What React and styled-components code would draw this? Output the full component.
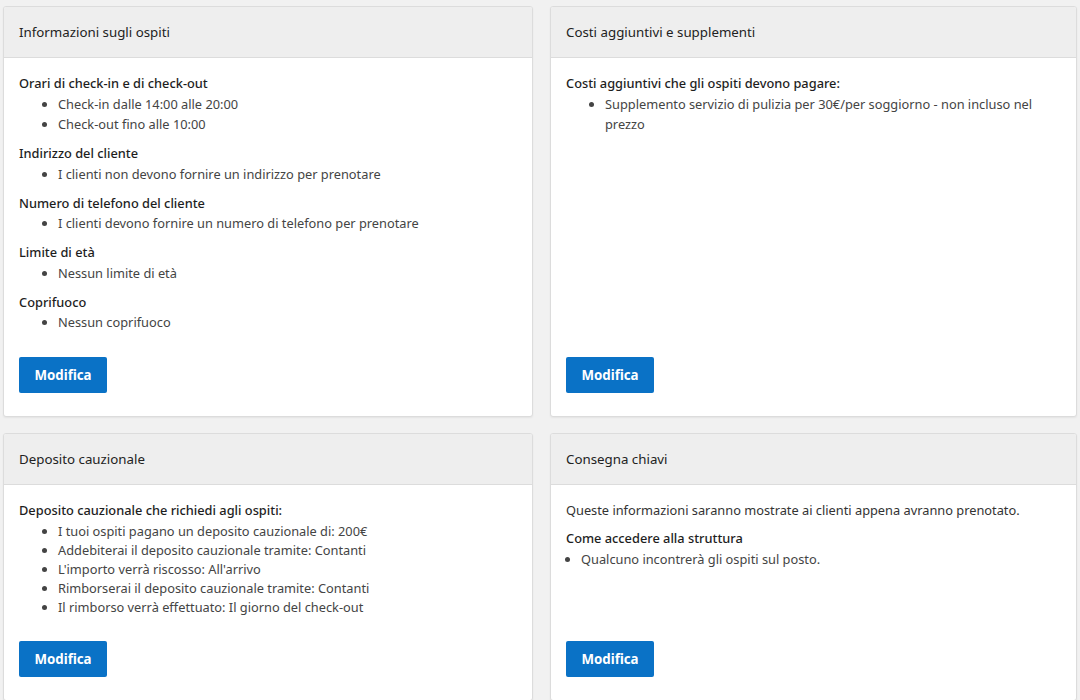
import React from 'react'
import styled, { createGlobalStyle } from 'styled-components'

const GlobalStyle = createGlobalStyle`
  html, body {
    margin: 0;
    background: #f1f1f1;
  }
  body {
    font-family: 'Noto Sans', 'Open Sans', sans-serif;
    font-size: 12.8px;
    color: #333;
  }
`

const Page = styled.div`
  display: grid;
  grid-template-columns: 530px 1fr;
  gap: 16px 17px;
  padding: 6px 3px;
`

const Card = styled.section`
  display: flex;
  flex-direction: column;
  background: #fff;
  border: 1px solid #dcdcdc;
  border-radius: 3px;
  box-shadow: 0 1px 2px rgba(0, 0, 0, 0.06);
  overflow: hidden;
`

const CardHeader = styled.header`
  height: 50px;
  display: flex;
  align-items: center;
  padding: 0 15px;
  background: #eeeeee;
  border-bottom: 1px solid #dcdcdc;
  color: #222;
  font-size: 13.3px;
`

const CardBody = styled.div`
  flex: 1;
  display: flex;
  flex-direction: column;
  padding: 15px 15px 23px;
  line-height: 20.5px;
`

const Intro = styled.p`
  margin: 0 0 8px;
  color: #333;
`

const Section = styled.div`
  & + & {
    margin-top: 8.5px;
  }
`

const Heading = styled.div`
  color: #1e1e1e;
  font-weight: 500;
`

const List = styled.ul`
  margin: ${({ $dense }) => ($dense ? '2px 0 0' : '0')};
  padding-left: ${({ $compact }) => ($compact ? '15px' : '39px')};
  padding-right: ${({ $wrapAt }) => $wrapAt || '0'};
  line-height: ${({ $dense }) => ($dense ? '19px' : 'inherit')};
  color: #444;
`

const Button = styled.button`
  align-self: flex-start;
  margin-top: auto;
  width: 88px;
  height: 36px;
  border: none;
  border-radius: 2px;
  background: #0a72c6;
  color: #fff;
  font-family: inherit;
  font-size: 13.3px;
  font-weight: 700;
  cursor: pointer;
`

const Spacer = styled.div`
  height: 24px;
  flex-shrink: 0;
`

const cards = [
  {
    title: 'Informazioni sugli ospiti',
    sections: [
      { heading: 'Orari di check-in e di check-out', items: ['Check-in dalle 14:00 alle 20:00', 'Check-out fino alle 10:00'] },
      { heading: 'Indirizzo del cliente', items: ['I clienti non devono fornire un indirizzo per prenotare'] },
      { heading: 'Numero di telefono del cliente', items: ['I clienti devono fornire un numero di telefono per prenotare'] },
      { heading: 'Limite di età', items: ['Nessun limite di età'] },
      { heading: 'Coprifuoco', items: ['Nessun coprifuoco'] },
    ],
  },
  {
    title: 'Costi aggiuntivi e supplementi',
    wrapAt: '16px',
    sections: [
      {
        heading: 'Costi aggiuntivi che gli ospiti devono pagare:',
        items: ['Supplemento servizio di pulizia per 30€/per soggiorno - non incluso nel prezzo'],
      },
    ],
  },
  {
    title: 'Deposito cauzionale',
    dense: true,
    sections: [
      {
        heading: 'Deposito cauzionale che richiedi agli ospiti:',
        items: [
          'I tuoi ospiti pagano un deposito cauzionale di: 200€',
          'Addebiterai il deposito cauzionale tramite: Contanti',
          "L'importo verrà riscosso: All'arrivo",
          'Rimborserai il deposito cauzionale tramite: Contanti',
          'Il rimborso verrà effettuato: Il giorno del check-out',
        ],
      },
    ],
  },
  {
    title: 'Consegna chiavi',
    intro: 'Queste informazioni saranno mostrate ai clienti appena avranno prenotato.',
    compact: true,
    sections: [
      { heading: 'Come accedere alla struttura', items: ['Qualcuno incontrerà gli ospiti sul posto.'] },
    ],
  },
]

export default function App() {
  return (
    <>
      <GlobalStyle />
      <Page>
        {cards.map((card) => (
          <Card key={card.title}>
            <CardHeader>{card.title}</CardHeader>
            <CardBody>
              {card.intro && <Intro>{card.intro}</Intro>}
              {card.sections.map((s) => (
                <Section key={s.heading}>
                  <Heading>{s.heading}</Heading>
                  <List $compact={card.compact} $wrapAt={card.wrapAt} $dense={card.dense}>
                    {s.items.map((item) => (
                      <li key={item}>{item}</li>
                    ))}
                  </List>
                </Section>
              ))}
              <Spacer />
              <Button>Modifica</Button>
            </CardBody>
          </Card>
        ))}
      </Page>
    </>
  )
}
